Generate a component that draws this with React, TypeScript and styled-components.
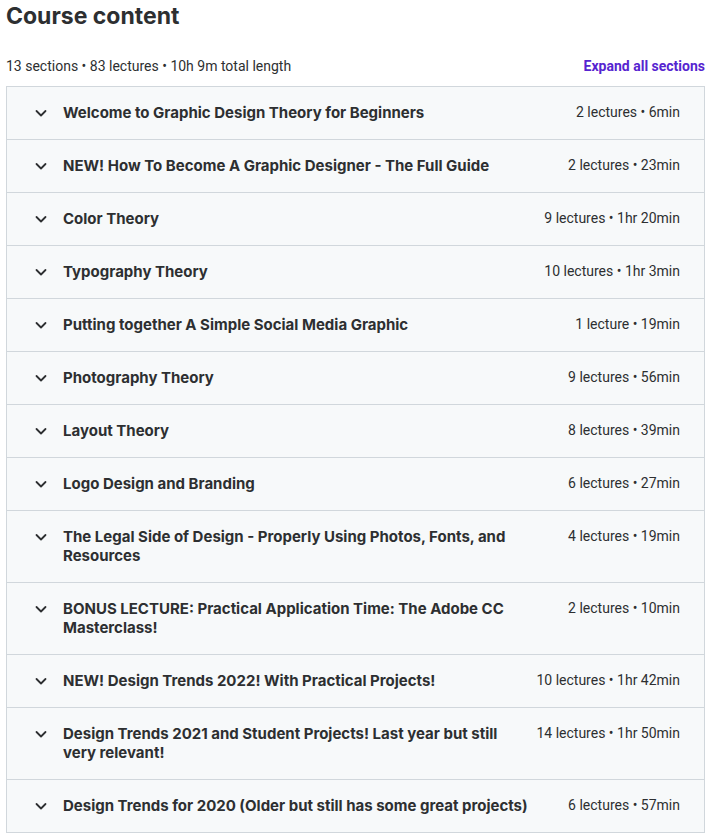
import React from "react";
import styled, { createGlobalStyle } from "styled-components";

const GlobalStyle = createGlobalStyle`
  html, body { margin: 0; padding: 0; background: #ffffff; }
  body { font-family: Roboto, "Liberation Sans", Arial, sans-serif; color: #2d2f31; }
  * { box-sizing: border-box; }
`;

const Page = styled.div`
  padding: 0 5px 0 6px;
  width: 710px;
`;

const Heading = styled.h2`
  margin: 0;
  font-family: Inter, Roboto, sans-serif;
  font-size: 23px;
  line-height: 32px;
  font-weight: 700;
  color: #2d2f31;
`;

const SummaryRow = styled.div`
  display: flex;
  align-items: center;
  justify-content: space-between;
  margin-top: 24px;
  height: 20px;
`;

const Summary = styled.span`
  font-size: 14px;
  color: #2d2f31;
`;

const ExpandButton = styled.button`
  border: 0;
  background: none;
  padding: 0;
  font-family: inherit;
  font-size: 14px;
  font-weight: 700;
  color: #5624d0;
  cursor: pointer;
`;

const Panel = styled.div`
  margin-top: 10px;
  border: 1px solid #d1d7dc;
  border-top: 0;
`;

const Section = styled.div`
  display: flex;
  align-items: flex-start;
  background: #f7f9fa;
  border-top: 1px solid #d1d7dc;
  padding: 16px 24px 17px 24px;
`;

const Chevron = styled.svg`
  flex: none;
  width: 16px;
  height: 16px;
  margin: 2px 14px 0 2px;
  color: #2d2f31;
`;

const Title = styled.span`
  flex: 1;
  font-family: Inter, Roboto, sans-serif;
  font-size: 15px;
  line-height: 19px;
  font-weight: 700;
  color: #2d2f31;
`;

const Length = styled.span`
  flex: none;
  margin-left: 16px;
  font-size: 14px;
  line-height: 19px;
  color: #2d2f31;
`;

const sections: [string, string][] = [
  ["Welcome to Graphic Design Theory for Beginners", "2 lectures • 6min"],
  ["NEW! How To Become A Graphic Designer - The Full Guide", "2 lectures • 23min"],
  ["Color Theory", "9 lectures • 1hr 20min"],
  ["Typography Theory", "10 lectures • 1hr 3min"],
  ["Putting together A Simple Social Media Graphic", "1 lecture • 19min"],
  ["Photography Theory", "9 lectures • 56min"],
  ["Layout Theory", "8 lectures • 39min"],
  ["Logo Design and Branding", "6 lectures • 27min"],
  ["The Legal Side of Design - Properly Using Photos, Fonts, and Resources", "4 lectures • 19min"],
  ["BONUS LECTURE: Practical Application Time: The Adobe CC Masterclass!", "2 lectures • 10min"],
  ["NEW! Design Trends 2022! With Practical Projects!", "10 lectures • 1hr 42min"],
  ["Design Trends 2021 and Student Projects! Last year but still very relevant!", "14 lectures • 1hr 50min"],
  ["Design Trends for 2020 (Older but still has some great projects)", "6 lectures • 57min"],
];

export default function App() {
  return (
    <Page>
      <GlobalStyle />
      <Heading>Course content</Heading>
      <SummaryRow>
        <Summary>13 sections • 83 lectures • 10h 9m total length</Summary>
        <ExpandButton>Expand all sections</ExpandButton>
      </SummaryRow>
      <Panel>
        {sections.map(([title, len]) => (
          <Section key={title}>
            <Chevron viewBox="0 0 16 16" fill="none">
              <path d="M3.5 6 L8 10.5 L12.5 6" stroke="currentColor" strokeWidth="1.8" strokeLinecap="round" strokeLinejoin="round" />
            </Chevron>
            <Title>{title}</Title>
            <Length>{len}</Length>
          </Section>
        ))}
      </Panel>
    </Page>
  );
}
